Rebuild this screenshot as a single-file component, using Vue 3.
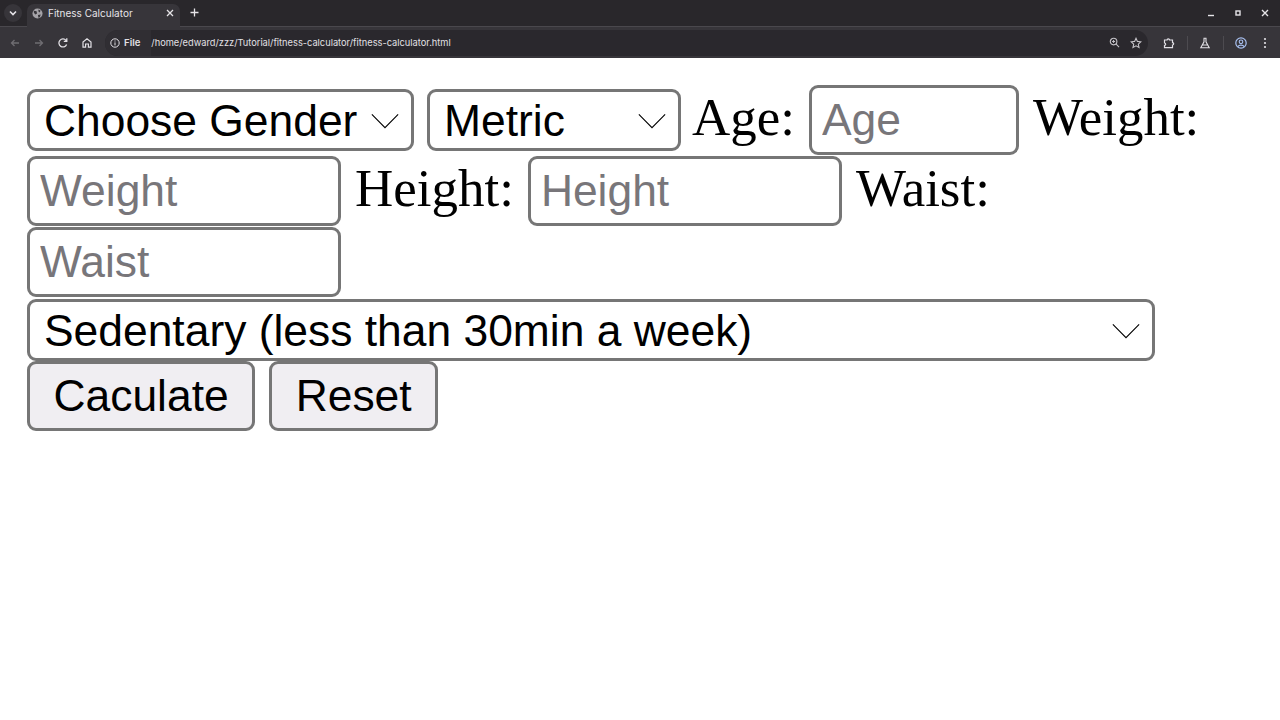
<template>
  <div class="browser">
    <div class="tab-strip">
      <button class="tab-search">
        <svg width="10" height="10" viewBox="0 0 10 10"><path d="M2 3.5 5 6.5 8 3.5" fill="none" stroke="#e6e4e8" stroke-width="1.6" /></svg>
      </button>
      <div class="tab">
        <svg class="globe" width="11" height="11" viewBox="0 0 12 12">
          <circle cx="6" cy="6" r="5.5" fill="#a5a3a8" />
          <path d="M2 3 5 3.5 5.5 6 3.5 7 2 5ZM7 1.5 9.5 3 8 5 7 3.5ZM6.5 7.5 9.5 7 8.5 10 7 10.5Z" fill="#37353a" />
        </svg>
        <span class="tab-title">Fitness Calculator</span>
        <svg class="tab-close" width="8" height="8" viewBox="0 0 8 8"><path d="M1 1 7 7M7 1 1 7" stroke="#e6e4e8" stroke-width="1.3" /></svg>
      </div>
      <svg class="new-tab" width="9" height="9" viewBox="0 0 9 9"><path d="M4.5 .5v8M.5 4.5h8" stroke="#e6e4e8" stroke-width="1.3" /></svg>
      <div class="window-btns">
        <svg width="8" height="8" viewBox="0 0 8 8"><path d="M1 6.5h6" stroke="#e6e4e8" stroke-width="1.4" /></svg>
        <svg width="8" height="8" viewBox="0 0 8 8"><rect x="2" y="2" width="4" height="4" fill="none" stroke="#e6e4e8" stroke-width="1.4" /></svg>
        <svg width="8" height="8" viewBox="0 0 8 8"><path d="M1 1 7 7M7 1 1 7" stroke="#e6e4e8" stroke-width="1.4" /></svg>
      </div>
    </div>
    <div class="toolbar">
      <div class="nav-btns">
        <svg width="12" height="12" viewBox="0 0 12 12"><path d="M10 6H2.5M5.5 3 2.5 6 5.5 9" fill="none" stroke="#6f6d72" stroke-width="1.3" /></svg>
        <svg width="12" height="12" viewBox="0 0 12 12"><path d="M2 6h7.5M6.5 3 9.5 6 6.5 9" fill="none" stroke="#6f6d72" stroke-width="1.3" /></svg>
        <svg width="12" height="12" viewBox="0 0 12 12"><path d="M9.6 7.5A4 4 0 1 1 9 3.4M9.8 1.3v3H6.8" fill="none" stroke="#e2e0e5" stroke-width="1.3" /></svg>
        <svg width="12" height="12" viewBox="0 0 12 12"><path d="M2 5 6 1.8 10 5v5.2H7.4V7H4.6v3.2H2Z" fill="none" stroke="#e2e0e5" stroke-width="1.2" /></svg>
      </div>
      <div class="omnibox">
        <div class="site-chip">
          <svg width="10" height="10" viewBox="0 0 10 10"><circle cx="5" cy="5" r="4.2" fill="none" stroke="#e2e0e5" stroke-width="1" /><path d="M5 4.4v3M5 2.5v1" stroke="#e2e0e5" stroke-width="1" /></svg>
          <span>File</span>
        </div>
        <span class="url">/home/edward/zzz/Tutorial/fitness-calculator/fitness-calculator.html</span>
        <div class="omni-icons">
          <svg width="11" height="11" viewBox="0 0 12 12"><circle cx="5" cy="5" r="3.6" fill="none" stroke="#c6c4c9" stroke-width="1.2" /><path d="M7.8 7.8 11 11M3.4 5h3.2M5 3.4v3.2" stroke="#c6c4c9" stroke-width="1.1" /></svg>
          <svg width="12" height="12" viewBox="0 0 12 12"><path d="M6 1.3 7.4 4.4 10.8 4.8 8.3 7.1 9 10.5 6 8.8 3 10.5 3.7 7.1 1.2 4.8 4.6 4.4Z" fill="none" stroke="#c6c4c9" stroke-width="1.1" /></svg>
        </div>
      </div>
      <div class="tool-icons">
        <svg width="12" height="12" viewBox="0 0 12 12"><path d="M1.5 3h2.6a1.2 1.2 0 0 1 2.4 0h3v2.6a1.2 1.2 0 0 1 0 2.4v2.6H1.5V8.4a1.2 1.2 0 0 0 0-2.4Z" fill="none" stroke="#e2e0e5" stroke-width="1.2" /></svg>
        <i class="sep"></i>
        <svg width="12" height="12" viewBox="0 0 12 12"><path d="M4.5 1.2h3M5 1.2v3.6L1.8 10.8h8.4L7 4.8V1.2M3.6 8h4.8" fill="none" stroke="#e2e0e5" stroke-width="1.1" /></svg>
        <i class="sep"></i>
        <svg width="12" height="12" viewBox="0 0 12 12"><circle cx="6" cy="6" r="5.2" fill="none" stroke="#a8c0f0" stroke-width="1.2" /><circle cx="6" cy="4.8" r="1.8" fill="none" stroke="#a8c0f0" stroke-width="1.1" /><path d="M2.8 9.6C4 7.6 8 7.6 9.2 9.6" fill="none" stroke="#a8c0f0" stroke-width="1.1" /></svg>
        <svg class="dots" width="4" height="12" viewBox="0 0 4 12"><circle cx="2" cy="2" r="1.1" fill="#e2e0e5" /><circle cx="2" cy="6" r="1.1" fill="#e2e0e5" /><circle cx="2" cy="10" r="1.1" fill="#e2e0e5" /></svg>
      </div>
    </div>
    <form class="calc" @submit.prevent>
      <select class="gender">
        <option>Choose Gender</option>
        <option>Male</option>
        <option>Female</option>
      </select>
      <select class="units">
        <option>Metric</option>
        <option>Imperial</option>
      </select>
      <label class="age-label">Age:</label>
      <input class="age" type="text" placeholder="Age" />
      <label>Weight:</label>
      <input class="wide" type="text" placeholder="Weight" />
      <label>Height:</label>
      <input class="wide" type="text" placeholder="Height" />
      <label>Waist:</label>
      <input class="wide" type="text" placeholder="Waist" />
      <select class="activity">
        <option>Sedentary (less than 30min a week)</option>
        <option>Active</option>
      </select>
      <button type="button">Caculate</button>
      <button type="reset">Reset</button>
    </form>
  </div>
</template>

<script setup>
</script>

<style scoped>
.browser {
  min-height: 720px;
  background: #fff;
  font-family: "Inter", "Liberation Sans", sans-serif;
}

.tab-strip {
  height: 26px;
  display: flex;
  align-items: flex-end;
  background: #29272b;
}

.tab-search {
  width: 18px;
  height: 18px;
  margin: 0 2px 4px 4px;
  padding: 0;
  border: none;
  border-radius: 50%;
  background: #37353a;
  display: flex;
  align-items: center;
  justify-content: center;
}

.tab {
  width: 153px;
  height: 23px;
  margin-left: 3px;
  margin-bottom: -1px;
  padding: 0 6px 5px 5px;
  box-sizing: border-box;
  display: flex;
  align-items: center;
  background: #37353a;
  border-radius: 7px 7px 0 0;
  color: #e6e4e8;
  font-size: 10px;
  position: relative;
}

.globe {
  margin-right: 5px;
}

.tab-title {
  flex: 1;
}

.new-tab {
  margin: 0 0 9px 10px;
}

.window-btns {
  margin-left: auto;
  display: flex;
  gap: 19px;
  padding-right: 11px;
  margin-bottom: 9px;
}

.toolbar {
  height: 32px;
  box-sizing: border-box;
  border-top: 1px solid #4a484d;
  display: flex;
  align-items: center;
  background: #37353a;
  color: #e2e0e5;
}

.nav-btns {
  display: flex;
  gap: 12px;
  margin-left: 9px;
}

.omnibox {
  height: 26px;
  width: 1043px;
  margin-left: 12px;
  display: flex;
  align-items: center;
  background: #2a282d;
  border-radius: 13px;
}

.site-chip {
  display: flex;
  align-items: center;
  gap: 4px;
  padding: 0 11px 0 5px;
  height: 26px;
  font-size: 9.6px;
  font-weight: 600;
  border-radius: 13px 0 0 13px;
  background: #302e33;
}

.url {
  font-size: 9.27px;
  color: #e2e0e5;
}

.omni-icons {
  margin-left: auto;
  display: flex;
  gap: 10.5px;
  padding-right: 6px;
}

.tool-icons {
  display: flex;
  align-items: center;
  margin-left: 15px;
  gap: 11.5px;
}

.sep {
  width: 1px;
  height: 14px;
  background: #4d4b50;
}

.dots {
  margin-left: 4.5px;
}

/* page was shot at 300% browser zoom */
.calc {
  zoom: 3;
  padding: 9px 8px 0 9px;
  font-family: "Liberation Serif", serif;
  font-size: 17.66px;
  color: #000;
}

.calc select,
.calc input,
.calc button {
  font-family: "Liberation Sans", sans-serif;
  font-size: 14.8px;
  border: 1px solid #767676;
  border-radius: 3px;
  color: #000;
  margin-right: 4.67px;
  margin-bottom: 0.33px;
  box-sizing: border-box;
}

.calc label {
  margin-right: 4.67px;
}

.calc select {
  appearance: none;
  height: 20.67px;
  padding: 0 4.67px;
  vertical-align: -0.33px;
  background: #fff url("data:image/svg+xml,%3Csvg xmlns='http://www.w3.org/2000/svg' width='10' height='6' viewBox='0 0 10 6'%3E%3Cpath d='M.3.5 5 5.2 9.7.5' fill='none' stroke='%23000' stroke-width='.4'/%3E%3C/svg%3E") no-repeat right 4.2px top 7px / 9.2px 5.5px;
}

.calc input {
  height: 23.33px;
  padding: 2px 3.33px;
  background: #fff;
}

.calc input::placeholder {
  color: #78767a;
}

.calc .gender {
  width: 129px;
  margin-right: 4.33px;
}

.calc .units {
  width: 84.67px;
  margin-right: 3.67px;
}

.calc .age {
  width: 70px;
  margin-right: 4.67px;
}

.wide {
  width: 104.67px;
}

.calc .activity {
  width: 376px;
  vertical-align: 0;
  margin-bottom: 0;
}

.calc button {
  height: 23.33px;
  padding: 0 7.83px;
  background: #f0eef2;
  margin-right: 4.67px;
}
</style>
